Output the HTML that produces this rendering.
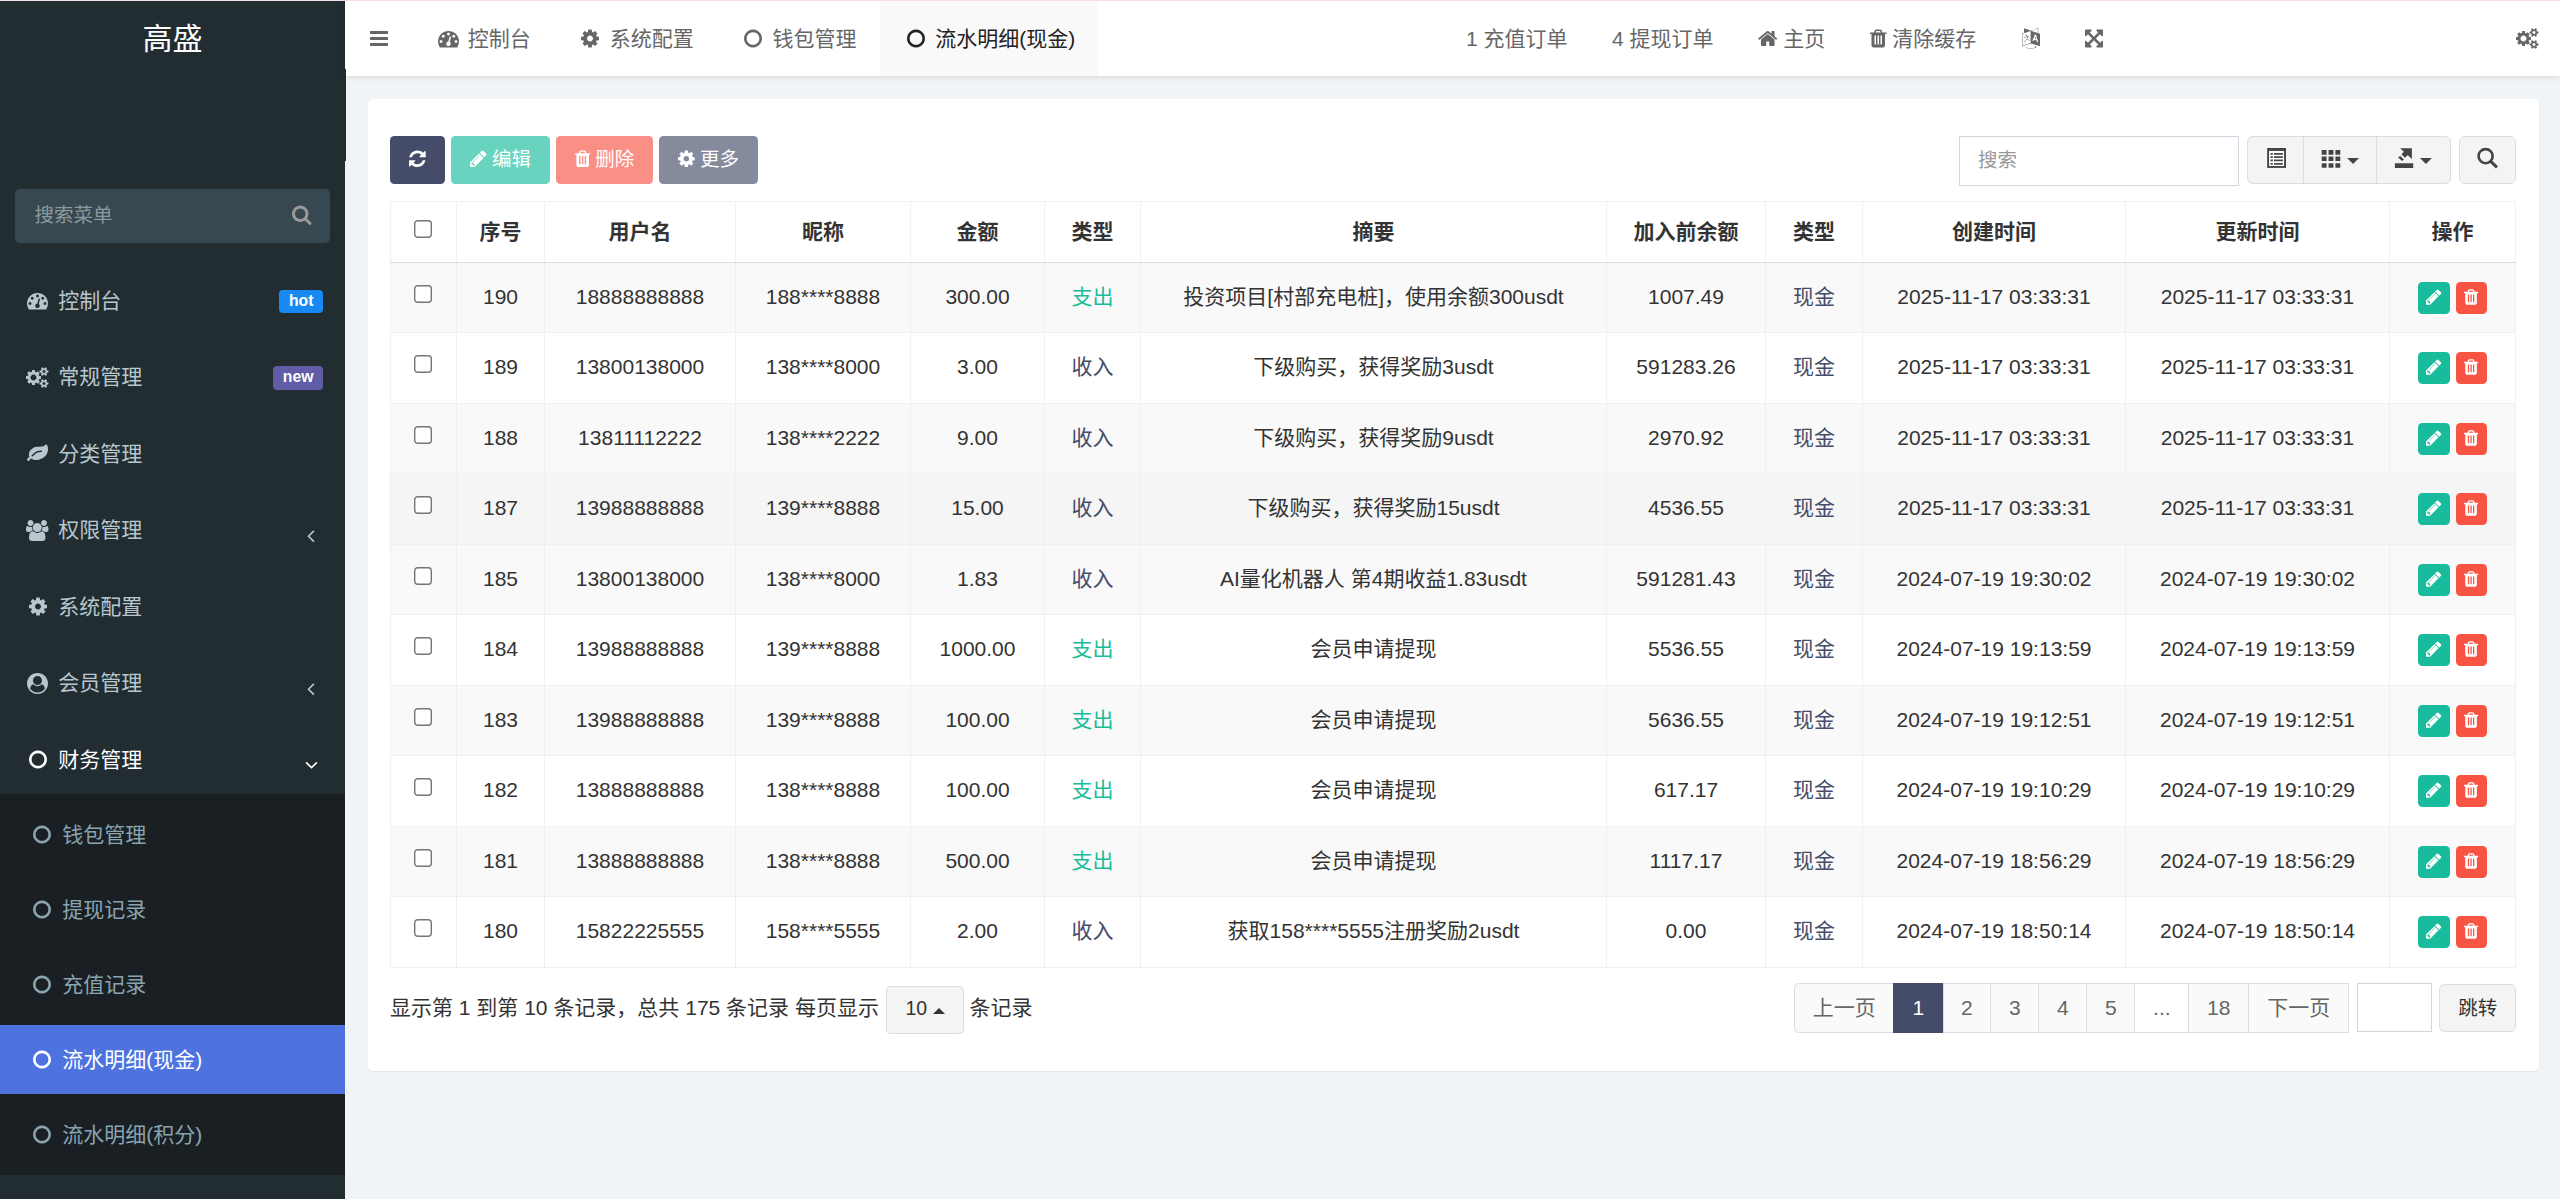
<!DOCTYPE html>
<html lang="zh-CN"><head><meta charset="utf-8"><title>高盛</title>
<style>
*{box-sizing:border-box}
html,body{margin:0;padding:0}
body{width:2560px;height:1199px;overflow:hidden;position:relative;background:#f1f4f6;color:#333;
 font-family:"Liberation Sans","Noto Sans CJK SC",sans-serif;font-size:21px;line-height:30px}
ul{list-style:none;margin:0;padding:0}
a{color:inherit;text-decoration:none}
svg.fa{height:1em;vertical-align:-0.19em;fill:currentColor;display:inline-block;overflow:visible}
.fw{display:inline-block;width:1.2857em;text-align:center}

/* sidebar */
#sb{position:absolute;left:0;top:0;width:345px;height:1199px;background:#222d32;color:#b8c7ce}
#sb .logo{height:75px;line-height:77px;text-align:center;font-size:30px;color:#fff}
#sb .sform{position:absolute;left:15px;top:189px;width:315px;height:54px;background:#374850;border-radius:5px}
#sb .sform .ph{position:absolute;left:19.5px;top:11px;color:#8d989d;line-height:30px;font-size:19.5px}
#sb .menu{position:absolute;left:0;top:265.5px;width:345px}
#sb .menu>li{margin-bottom:7.5px;position:relative}
#sb .menu>li>a{display:block;height:69px;line-height:69px;padding-left:22.5px;position:relative;white-space:nowrap}
#sb .mi{display:inline-block;width:30px;text-align:center}
#sb .menu>li.act>a{color:#fff}
#sb .lbl{position:absolute;right:22px;top:24.5px;height:23px;line-height:21px;padding:0 9.5px;border-radius:4px;color:#fff;font-weight:bold;font-size:15.75px}
#sb .arr{position:absolute;right:30.5px;top:5px;font-size:21px;line-height:69px}
#sb .arr.down{transform:rotate(-90deg);right:31.5px;top:6px}
#sb .tv{background:#191f23;padding:6px 0 6px 0;}
#sb .tv li:last-child{margin-bottom:0}
#sb .tv li{height:69px;margin-bottom:6px}
#sb .tv li a{display:block;height:69px;line-height:69px;padding-left:26.5px;color:#8aa4af;white-space:nowrap}
#sb .tv li.cur{background:#4e73df}
#sb .tv li.cur a{color:#fff}

/* navbar */
#nb{position:absolute;left:345px;top:0;width:2215px;height:76px;background:#fff;border-top:1px solid #fff;box-shadow:0 1px 6px rgba(0,21,41,.12);color:#666}
#nb .tog{position:absolute;left:24.7px;top:22.5px;line-height:30px;color:#666}
#nb .tabs{position:absolute;left:67.5px;top:0;height:75px;white-space:nowrap;font-size:0}
#nb .tabs li{display:inline-block;height:75px;padding:22.5px 22.5px 0;font-size:21px;line-height:30px;margin-right:1px;vertical-align:top}
#nb .tabs li.on{background:#f9f9f9;color:#222}
#nb .rnav li{position:absolute;top:22.5px;line-height:30px;white-space:nowrap}

/* panel */
#panel{position:absolute;left:368px;top:99px;width:2171px;height:972px;background:#fff;border-radius:5px;box-shadow:0 1px 2px rgba(0,0,0,.06)}
.tb .btn{position:absolute;top:37px;height:48px;border-radius:4.5px;color:#fff;font-size:19.5px;line-height:47px;text-align:center;white-space:nowrap}
.b-pri{background:#444c69}.b-suc{background:#18bc9c}.b-dan{background:#f75444}
.btn.dis{opacity:.65}
.srch{position:absolute;left:1591px;top:37px;width:280px;height:49.5px;border:1px solid #d2d6de;background:#fff}
.srch span{position:absolute;left:18px;top:8px;color:#999;line-height:30px;font-size:19.5px}
.bg{position:absolute;left:1879px;top:37px;width:204px;height:48px;border:1px solid #ddd;border-radius:6px;background:#f4f4f4;overflow:hidden}
.bg a{position:absolute;top:0;height:46px;line-height:46px;text-align:center}
.bg .b1{left:0;width:56px;border-right:1px solid #ddd}
.bg .b2{left:56px;width:73px;border-right:1px solid #ddd}
.bg .b3{left:129px;width:73px}
.caret{display:inline-block;width:0;height:0;border-left:6px solid transparent;border-right:6px solid transparent;border-top:6px solid #333;vertical-align:middle;margin-left:2px}
.caret.up{border-top:0;border-bottom:6px solid #333}
.sbtn{position:absolute;left:2091px;top:37px;width:57px;height:48px;border:1px solid #ddd;border-radius:6px;background:#f4f4f4;text-align:center;line-height:44px;font-size:24px;color:#333}

#t{position:absolute;left:22px;top:102px;width:2125px;border-collapse:collapse;table-layout:fixed}
#t th,#t td{border:1px solid #f0f0f0;text-align:center;vertical-align:middle;padding:0;white-space:nowrap;overflow:hidden}
#t th{height:60.5px;font-weight:bold;border-bottom:1px solid #ddd;color:#333}
#t td{height:70.5px;padding-bottom:1px}
#t tr.odd td{background:#f9f9f9}
#t tr.hov td{background:#f5f5f5}
.cb{display:inline-block;width:18px;height:18px;vertical-align:middle;position:relative;top:-4.5px;left:-1px}
.suc{color:#18bc9c}.pri{color:#444c69}
.xs{display:inline-block;height:32px;line-height:30px;border-radius:4.5px;color:#fff;font-size:18px;vertical-align:middle;text-align:center}
.xs.ed{background:#18bc9c;width:32px;margin-right:0.3px}.xs.de{background:#f75444;width:31px}
.xs{position:relative;top:1.5px}
#t tbody tr:nth-child(even) .xs{top:0.5px}
.xs svg.fa{vertical-align:-0.165em}
.btn svg.fa{vertical-align:-0.142857em}

.pinfo{position:absolute;left:22px;top:886px;line-height:30px;white-space:nowrap}
.psz{display:inline-block;height:48px;line-height:42.5px;padding:0 18px;border:1px solid #ddd;border-radius:4.5px;background:#f4f4f4;font-size:19.5px;vertical-align:middle;position:relative;top:0.5px}
.psz .caret{margin-left:0;position:relative;top:2px}
.psz{margin-left:1.7px}
.pg{position:absolute;left:1426.3px;top:884px;height:49.5px;white-space:nowrap;font-size:0}
.pg li{position:absolute;top:0;height:49.5px;line-height:47.5px;border:1px solid #ddd;background:#fafafa;color:#666;font-size:21px;text-align:center}
.pg li:first-child{border-radius:4.5px 0 0 4.5px}
.pg li.act{background:#444c69;border-color:#444c69;color:#fff}
.pg li.dis{background:#fff}
.jin{position:absolute;left:1989px;top:884px;width:75px;height:49px;border:1px solid #d2d6de;background:#fff}
.jbtn{position:absolute;left:2071.4px;top:885.2px;width:76.6px;height:47.6px;border:1px solid #ddd;border-radius:5.5px;background:#f4f4f4;text-align:center;line-height:46px;font-size:19.5px;color:#333}

#strip{position:absolute;left:345px;top:69px;width:1px;height:92px;background:#222d32;z-index:5}

#pink{position:absolute;left:0;top:0;width:2560px;height:1px;background:#f7dee3;z-index:10}

</style></head><body>
<aside id="sb">
  <div class="logo">高盛</div>
  <div class="sform"><span class="ph">搜索菜单</span><svg class="fa " viewBox="0 -1536 1664 1792" style="width:0.9286em;position:absolute;left:277px;top:15px;font-size:21px;color:#999"><path transform="scale(1,-1)" d="M1152 704q0 185 -131.5 316.5t-316.5 131.5t-316.5 -131.5t-131.5 -316.5t131.5 -316.5t316.5 -131.5t316.5 131.5t131.5 316.5zM1664 -128q0 -52 -38 -90t-90 -38q-54 0 -90 38l-343 342q-179 -124 -399 -124q-143 0 -273.5 55.5t-225 150t-150 225t-55.5 273.5 t55.5 273.5t150 225t225 150t273.5 55.5t273.5 -55.5t225 -150t150 -225t55.5 -273.5q0 -220 -124 -399l343 -343q37 -37 37 -90z"/></svg></div>
  <ul class="menu">
<li class=""><a><span class="mi"><svg class="fa " viewBox="0 -1536 1792 1792" style="width:1.0000em;"><path transform="scale(1,-1)" d="M384 384q0 53 -37.5 90.5t-90.5 37.5t-90.5 -37.5t-37.5 -90.5t37.5 -90.5t90.5 -37.5t90.5 37.5t37.5 90.5zM576 832q0 53 -37.5 90.5t-90.5 37.5t-90.5 -37.5t-37.5 -90.5t37.5 -90.5t90.5 -37.5t90.5 37.5t37.5 90.5zM1004 351l101 382q6 26 -7.5 48.5t-38.5 29.5 t-48 -6.5t-30 -39.5l-101 -382q-60 -5 -107 -43.5t-63 -98.5q-20 -77 20 -146t117 -89t146 20t89 117q16 60 -6 117t-72 91zM1664 384q0 53 -37.5 90.5t-90.5 37.5t-90.5 -37.5t-37.5 -90.5t37.5 -90.5t90.5 -37.5t90.5 37.5t37.5 90.5zM1024 1024q0 53 -37.5 90.5 t-90.5 37.5t-90.5 -37.5t-37.5 -90.5t37.5 -90.5t90.5 -37.5t90.5 37.5t37.5 90.5zM1472 832q0 53 -37.5 90.5t-90.5 37.5t-90.5 -37.5t-37.5 -90.5t37.5 -90.5t90.5 -37.5t90.5 37.5t37.5 90.5zM1792 384q0 -261 -141 -483q-19 -29 -54 -29h-1402q-35 0 -54 29 q-141 221 -141 483q0 182 71 348t191 286t286 191t348 71t348 -71t286 -191t191 -286t71 -348z"/></svg></span> <span>控制台</span><span class="lbl" style="background:#178af2;padding-left:10.5px">hot</span></a>
</li>
<li class=""><a><span class="mi"><svg class="fa " viewBox="0 -1536 1920 1792" style="width:1.0714em;"><path transform="scale(1,-1)" d="M896 640q0 106 -75 181t-181 75t-181 -75t-75 -181t75 -181t181 -75t181 75t75 181zM1664 128q0 52 -38 90t-90 38t-90 -38t-38 -90q0 -53 37.5 -90.5t90.5 -37.5t90.5 37.5t37.5 90.5zM1664 1152q0 52 -38 90t-90 38t-90 -38t-38 -90q0 -53 37.5 -90.5t90.5 -37.5 t90.5 37.5t37.5 90.5zM1280 731v-185q0 -10 -7 -19.5t-16 -10.5l-155 -24q-11 -35 -32 -76q34 -48 90 -115q7 -11 7 -20q0 -12 -7 -19q-23 -30 -82.5 -89.5t-78.5 -59.5q-11 0 -21 7l-115 90q-37 -19 -77 -31q-11 -108 -23 -155q-7 -24 -30 -24h-186q-11 0 -20 7.5t-10 17.5 l-23 153q-34 10 -75 31l-118 -89q-7 -7 -20 -7q-11 0 -21 8q-144 133 -144 160q0 9 7 19q10 14 41 53t47 61q-23 44 -35 82l-152 24q-10 1 -17 9.5t-7 19.5v185q0 10 7 19.5t16 10.5l155 24q11 35 32 76q-34 48 -90 115q-7 11 -7 20q0 12 7 20q22 30 82 89t79 59q11 0 21 -7 l115 -90q34 18 77 32q11 108 23 154q7 24 30 24h186q11 0 20 -7.5t10 -17.5l23 -153q34 -10 75 -31l118 89q8 7 20 7q11 0 21 -8q144 -133 144 -160q0 -8 -7 -19q-12 -16 -42 -54t-45 -60q23 -48 34 -82l152 -23q10 -2 17 -10.5t7 -19.5zM1920 198v-140q0 -16 -149 -31 q-12 -27 -30 -52q51 -113 51 -138q0 -4 -4 -7q-122 -71 -124 -71q-8 0 -46 47t-52 68q-20 -2 -30 -2t-30 2q-14 -21 -52 -68t-46 -47q-2 0 -124 71q-4 3 -4 7q0 25 51 138q-18 25 -30 52q-149 15 -149 31v140q0 16 149 31q13 29 30 52q-51 113 -51 138q0 4 4 7q4 2 35 20 t59 34t30 16q8 0 46 -46.5t52 -67.5q20 2 30 2t30 -2q51 71 92 112l6 2q4 0 124 -70q4 -3 4 -7q0 -25 -51 -138q17 -23 30 -52q149 -15 149 -31zM1920 1222v-140q0 -16 -149 -31q-12 -27 -30 -52q51 -113 51 -138q0 -4 -4 -7q-122 -71 -124 -71q-8 0 -46 47t-52 68 q-20 -2 -30 -2t-30 2q-14 -21 -52 -68t-46 -47q-2 0 -124 71q-4 3 -4 7q0 25 51 138q-18 25 -30 52q-149 15 -149 31v140q0 16 149 31q13 29 30 52q-51 113 -51 138q0 4 4 7q4 2 35 20t59 34t30 16q8 0 46 -46.5t52 -67.5q20 2 30 2t30 -2q51 71 92 112l6 2q4 0 124 -70 q4 -3 4 -7q0 -25 -51 -138q17 -23 30 -52q149 -15 149 -31z"/></svg></span> <span>常规管理</span><span class="lbl" style="background:#605ca8;top:23.5px;height:24px;line-height:22px">new</span></a>
</li>
<li class=""><a><span class="mi"><svg class="fa " viewBox="0 -1536 1792 1792" style="width:1.0000em;"><path transform="scale(1,-1)" d="M1280 832q0 26 -19 45t-45 19q-172 0 -318 -49.5t-259.5 -134t-235.5 -219.5q-19 -21 -19 -45q0 -26 19 -45t45 -19q24 0 45 19q27 24 74 71t67 66q137 124 268.5 176t313.5 52q26 0 45 19t19 45zM1792 1030q0 -95 -20 -193q-46 -224 -184.5 -383t-357.5 -268 q-214 -108 -438 -108q-148 0 -286 47q-15 5 -88 42t-96 37q-16 0 -39.5 -32t-45 -70t-52.5 -70t-60 -32q-43 0 -63.5 17.5t-45.5 59.5q-2 4 -6 11t-5.5 10t-3 9.5t-1.5 13.5q0 35 31 73.5t68 65.5t68 56t31 48q0 4 -14 38t-16 44q-9 51 -9 104q0 115 43.5 220t119 184.5 t170.5 139t204 95.5q55 18 145 25.5t179.5 9t178.5 6t163.5 24t113.5 56.5l29.5 29.5t29.5 28t27 20t36.5 16t43.5 4.5q39 0 70.5 -46t47.5 -112t24 -124t8 -96z"/></svg></span> <span>分类管理</span></a>
</li>
<li class=""><a><span class="mi"><svg class="fa " viewBox="0 -1536 1920 1792" style="width:1.0714em;"><path transform="scale(1,-1)" d="M593 640q-162 -5 -265 -128h-134q-82 0 -138 40.5t-56 118.5q0 353 124 353q6 0 43.5 -21t97.5 -42.5t119 -21.5q67 0 133 23q-5 -37 -5 -66q0 -139 81 -256zM1664 3q0 -120 -73 -189.5t-194 -69.5h-874q-121 0 -194 69.5t-73 189.5q0 53 3.5 103.5t14 109t26.5 108.5 t43 97.5t62 81t85.5 53.5t111.5 20q10 0 43 -21.5t73 -48t107 -48t135 -21.5t135 21.5t107 48t73 48t43 21.5q61 0 111.5 -20t85.5 -53.5t62 -81t43 -97.5t26.5 -108.5t14 -109t3.5 -103.5zM640 1280q0 -106 -75 -181t-181 -75t-181 75t-75 181t75 181t181 75t181 -75 t75 -181zM1344 896q0 -159 -112.5 -271.5t-271.5 -112.5t-271.5 112.5t-112.5 271.5t112.5 271.5t271.5 112.5t271.5 -112.5t112.5 -271.5zM1920 671q0 -78 -56 -118.5t-138 -40.5h-134q-103 123 -265 128q81 117 81 256q0 29 -5 66q66 -23 133 -23q59 0 119 21.5t97.5 42.5 t43.5 21q124 0 124 -353zM1792 1280q0 -106 -75 -181t-181 -75t-181 75t-75 181t75 181t181 75t181 -75t75 -181z"/></svg></span> <span>权限管理</span><span class="arr"><svg class="fa " viewBox="0 -1536 640 1792" style="width:0.3571em;"><path transform="scale(1,-1)" d="M627 992q0 -13 -10 -23l-393 -393l393 -393q10 -10 10 -23t-10 -23l-50 -50q-10 -10 -23 -10t-23 10l-466 466q-10 10 -10 23t10 23l466 466q10 10 23 10t23 -10l50 -50q10 -10 10 -23z"/></svg></span></a>
</li>
<li class=""><a><span class="mi"><svg class="fa " viewBox="0 -1536 1536 1792" style="width:0.8571em;"><path transform="scale(1,-1)" d="M1024 640q0 106 -75 181t-181 75t-181 -75t-75 -181t75 -181t181 -75t181 75t75 181zM1536 749v-222q0 -12 -8 -23t-20 -13l-185 -28q-19 -54 -39 -91q35 -50 107 -138q10 -12 10 -25t-9 -23q-27 -37 -99 -108t-94 -71q-12 0 -26 9l-138 108q-44 -23 -91 -38 q-16 -136 -29 -186q-7 -28 -36 -28h-222q-14 0 -24.5 8.5t-11.5 21.5l-28 184q-49 16 -90 37l-141 -107q-10 -9 -25 -9q-14 0 -25 11q-126 114 -165 168q-7 10 -7 23q0 12 8 23q15 21 51 66.5t54 70.5q-27 50 -41 99l-183 27q-13 2 -21 12.5t-8 23.5v222q0 12 8 23t19 13 l186 28q14 46 39 92q-40 57 -107 138q-10 12 -10 24q0 10 9 23q26 36 98.5 107.5t94.5 71.5q13 0 26 -10l138 -107q44 23 91 38q16 136 29 186q7 28 36 28h222q14 0 24.5 -8.5t11.5 -21.5l28 -184q49 -16 90 -37l142 107q9 9 24 9q13 0 25 -10q129 -119 165 -170q7 -8 7 -22 q0 -12 -8 -23q-15 -21 -51 -66.5t-54 -70.5q26 -50 41 -98l183 -28q13 -2 21 -12.5t8 -23.5z"/></svg></span> <span>系统配置</span></a>
</li>
<li class=""><a><span class="mi"><svg class="fa " viewBox="0 -1536 1792 1792" style="width:1.0000em;"><path transform="scale(1,-1)" d="M1523 197q-22 155 -87.5 257.5t-184.5 118.5q-67 -74 -159.5 -115.5t-195.5 -41.5t-195.5 41.5t-159.5 115.5q-119 -16 -184.5 -118.5t-87.5 -257.5q106 -150 271 -237.5t356 -87.5t356 87.5t271 237.5zM1280 896q0 159 -112.5 271.5t-271.5 112.5t-271.5 -112.5 t-112.5 -271.5t112.5 -271.5t271.5 -112.5t271.5 112.5t112.5 271.5zM1792 640q0 -182 -71 -347.5t-190.5 -286t-285.5 -191.5t-349 -71q-182 0 -348 71t-286 191t-191 286t-71 348t71 348t191 286t286 191t348 71t348 -71t286 -191t191 -286t71 -348z"/></svg></span> <span>会员管理</span><span class="arr"><svg class="fa " viewBox="0 -1536 640 1792" style="width:0.3571em;"><path transform="scale(1,-1)" d="M627 992q0 -13 -10 -23l-393 -393l393 -393q10 -10 10 -23t-10 -23l-50 -50q-10 -10 -23 -10t-23 10l-466 466q-10 10 -10 23t10 23l466 466q10 10 23 10t23 -10l50 -50q10 -10 10 -23z"/></svg></span></a>
</li>
<li class="act"><a><span class="mi"><svg class="fa " viewBox="0 -1536 1536 1792" style="width:0.8571em;"><path transform="scale(1,-1)" d="M768 1184q-148 0 -273 -73t-198 -198t-73 -273t73 -273t198 -198t273 -73t273 73t198 198t73 273t-73 273t-198 198t-273 73zM1536 640q0 -209 -103 -385.5t-279.5 -279.5t-385.5 -103t-385.5 103t-279.5 279.5t-103 385.5t103 385.5t279.5 279.5t385.5 103t385.5 -103 t279.5 -279.5t103 -385.5z"/></svg></span> <span>财务管理</span><span class="arr down"><svg class="fa " viewBox="0 -1536 640 1792" style="width:0.3571em;"><path transform="scale(1,-1)" d="M627 992q0 -13 -10 -23l-393 -393l393 -393q10 -10 10 -23t-10 -23l-50 -50q-10 -10 -23 -10t-23 10l-466 466q-10 10 -10 23t10 23l466 466q10 10 23 10t23 -10l50 -50q10 -10 10 -23z"/></svg></span></a>
<ul class="tv">
<li><a><span class="mi"><svg class="fa " viewBox="0 -1536 1536 1792" style="width:0.8571em;"><path transform="scale(1,-1)" d="M768 1184q-148 0 -273 -73t-198 -198t-73 -273t73 -273t198 -198t273 -73t273 73t198 198t73 273t-73 273t-198 198t-273 73zM1536 640q0 -209 -103 -385.5t-279.5 -279.5t-385.5 -103t-385.5 103t-279.5 279.5t-103 385.5t103 385.5t279.5 279.5t385.5 103t385.5 -103 t279.5 -279.5t103 -385.5z"/></svg></span> <span>钱包管理</span></a></li>
<li><a><span class="mi"><svg class="fa " viewBox="0 -1536 1536 1792" style="width:0.8571em;"><path transform="scale(1,-1)" d="M768 1184q-148 0 -273 -73t-198 -198t-73 -273t73 -273t198 -198t273 -73t273 73t198 198t73 273t-73 273t-198 198t-273 73zM1536 640q0 -209 -103 -385.5t-279.5 -279.5t-385.5 -103t-385.5 103t-279.5 279.5t-103 385.5t103 385.5t279.5 279.5t385.5 103t385.5 -103 t279.5 -279.5t103 -385.5z"/></svg></span> <span>提现记录</span></a></li>
<li><a><span class="mi"><svg class="fa " viewBox="0 -1536 1536 1792" style="width:0.8571em;"><path transform="scale(1,-1)" d="M768 1184q-148 0 -273 -73t-198 -198t-73 -273t73 -273t198 -198t273 -73t273 73t198 198t73 273t-73 273t-198 198t-273 73zM1536 640q0 -209 -103 -385.5t-279.5 -279.5t-385.5 -103t-385.5 103t-279.5 279.5t-103 385.5t103 385.5t279.5 279.5t385.5 103t385.5 -103 t279.5 -279.5t103 -385.5z"/></svg></span> <span>充值记录</span></a></li>
<li class="cur"><a><span class="mi"><svg class="fa " viewBox="0 -1536 1536 1792" style="width:0.8571em;"><path transform="scale(1,-1)" d="M768 1184q-148 0 -273 -73t-198 -198t-73 -273t73 -273t198 -198t273 -73t273 73t198 198t73 273t-73 273t-198 198t-273 73zM1536 640q0 -209 -103 -385.5t-279.5 -279.5t-385.5 -103t-385.5 103t-279.5 279.5t-103 385.5t103 385.5t279.5 279.5t385.5 103t385.5 -103 t279.5 -279.5t103 -385.5z"/></svg></span> <span>流水明细(现金)</span></a></li>
<li><a><span class="mi"><svg class="fa " viewBox="0 -1536 1536 1792" style="width:0.8571em;"><path transform="scale(1,-1)" d="M768 1184q-148 0 -273 -73t-198 -198t-73 -273t73 -273t198 -198t273 -73t273 73t198 198t73 273t-73 273t-198 198t-273 73zM1536 640q0 -209 -103 -385.5t-279.5 -279.5t-385.5 -103t-385.5 103t-279.5 279.5t-103 385.5t103 385.5t279.5 279.5t385.5 103t385.5 -103 t279.5 -279.5t103 -385.5z"/></svg></span> <span>流水明细(积分)</span></a></li>
</ul>
</li>
  </ul>
</aside>
<div id="pink"></div>
<div id="strip"></div>
<header id="nb">
  <a class="tog"><svg class="fa " viewBox="0 -1536 1536 1792" style="width:0.8571em;"><path transform="scale(1,-1)" d="M1536 192v-128q0 -26 -19 -45t-45 -19h-1408q-26 0 -45 19t-19 45v128q0 26 19 45t45 19h1408q26 0 45 -19t19 -45zM1536 704v-128q0 -26 -19 -45t-45 -19h-1408q-26 0 -45 19t-19 45v128q0 26 19 45t45 19h1408q26 0 45 -19t19 -45zM1536 1216v-128q0 -26 -19 -45 t-45 -19h-1408q-26 0 -45 19t-19 45v128q0 26 19 45t45 19h1408q26 0 45 -19t19 -45z"/></svg></a>
  <ul class="tabs"><li class=""><a><span class="fw" style=""><svg class="fa " viewBox="0 -1536 1792 1792" style="width:1.0000em;"><path transform="scale(1,-1)" d="M384 384q0 53 -37.5 90.5t-90.5 37.5t-90.5 -37.5t-37.5 -90.5t37.5 -90.5t90.5 -37.5t90.5 37.5t37.5 90.5zM576 832q0 53 -37.5 90.5t-90.5 37.5t-90.5 -37.5t-37.5 -90.5t37.5 -90.5t90.5 -37.5t90.5 37.5t37.5 90.5zM1004 351l101 382q6 26 -7.5 48.5t-38.5 29.5 t-48 -6.5t-30 -39.5l-101 -382q-60 -5 -107 -43.5t-63 -98.5q-20 -77 20 -146t117 -89t146 20t89 117q16 60 -6 117t-72 91zM1664 384q0 53 -37.5 90.5t-90.5 37.5t-90.5 -37.5t-37.5 -90.5t37.5 -90.5t90.5 -37.5t90.5 37.5t37.5 90.5zM1024 1024q0 53 -37.5 90.5 t-90.5 37.5t-90.5 -37.5t-37.5 -90.5t37.5 -90.5t90.5 -37.5t90.5 37.5t37.5 90.5zM1472 832q0 53 -37.5 90.5t-90.5 37.5t-90.5 -37.5t-37.5 -90.5t37.5 -90.5t90.5 -37.5t90.5 37.5t37.5 90.5zM1792 384q0 -261 -141 -483q-19 -29 -54 -29h-1402q-35 0 -54 29 q-141 221 -141 483q0 182 71 348t191 286t286 191t348 71t348 -71t286 -191t191 -286t71 -348z"/></svg></span> <span>控制台</span></a></li><li class=""><a><span class="fw" style=""><svg class="fa " viewBox="0 -1536 1536 1792" style="width:0.8571em;"><path transform="scale(1,-1)" d="M1024 640q0 106 -75 181t-181 75t-181 -75t-75 -181t75 -181t181 -75t181 75t75 181zM1536 749v-222q0 -12 -8 -23t-20 -13l-185 -28q-19 -54 -39 -91q35 -50 107 -138q10 -12 10 -25t-9 -23q-27 -37 -99 -108t-94 -71q-12 0 -26 9l-138 108q-44 -23 -91 -38 q-16 -136 -29 -186q-7 -28 -36 -28h-222q-14 0 -24.5 8.5t-11.5 21.5l-28 184q-49 16 -90 37l-141 -107q-10 -9 -25 -9q-14 0 -25 11q-126 114 -165 168q-7 10 -7 23q0 12 8 23q15 21 51 66.5t54 70.5q-27 50 -41 99l-183 27q-13 2 -21 12.5t-8 23.5v222q0 12 8 23t19 13 l186 28q14 46 39 92q-40 57 -107 138q-10 12 -10 24q0 10 9 23q26 36 98.5 107.5t94.5 71.5q13 0 26 -10l138 -107q44 23 91 38q16 136 29 186q7 28 36 28h222q14 0 24.5 -8.5t11.5 -21.5l28 -184q49 -16 90 -37l142 107q9 9 24 9q13 0 25 -10q129 -119 165 -170q7 -8 7 -22 q0 -12 -8 -23q-15 -21 -51 -66.5t-54 -70.5q26 -50 41 -98l183 -28q13 -2 21 -12.5t8 -23.5z"/></svg></span> <span>系统配置</span></a></li><li class=""><a><span class="fw" style=""><svg class="fa " viewBox="0 -1536 1536 1792" style="width:0.8571em;"><path transform="scale(1,-1)" d="M768 1184q-148 0 -273 -73t-198 -198t-73 -273t73 -273t198 -198t273 -73t273 73t198 198t73 273t-73 273t-198 198t-273 73zM1536 640q0 -209 -103 -385.5t-279.5 -279.5t-385.5 -103t-385.5 103t-279.5 279.5t-103 385.5t103 385.5t279.5 279.5t385.5 103t385.5 -103 t279.5 -279.5t103 -385.5z"/></svg></span> <span>钱包管理</span></a></li><li class="on"><a><span class="fw" style=""><svg class="fa " viewBox="0 -1536 1536 1792" style="width:0.8571em;"><path transform="scale(1,-1)" d="M768 1184q-148 0 -273 -73t-198 -198t-73 -273t73 -273t198 -198t273 -73t273 73t198 198t73 273t-73 273t-198 198t-273 73zM1536 640q0 -209 -103 -385.5t-279.5 -279.5t-385.5 -103t-385.5 103t-279.5 279.5t-103 385.5t103 385.5t279.5 279.5t385.5 103t385.5 -103 t279.5 -279.5t103 -385.5z"/></svg></span> <span>流水明细(现金)</span></a></li></ul>
  <ul class="rnav">
    <li style="left:1121px"><a>1 充值订单</a></li>
    <li style="left:1267px"><a>4 提现订单</a></li>
    <li style="left:1413px"><a><svg class="fa " viewBox="0 -1536 1664 1792" style="width:0.9286em;"><path transform="scale(1,-1)" d="M1408 544v-480q0 -26 -19 -45t-45 -19h-384v384h-256v-384h-384q-26 0 -45 19t-19 45v480q0 1 0.5 3t0.5 3l575 474l575 -474q1 -2 1 -6zM1631 613l-62 -74q-8 -9 -21 -11h-3q-13 0 -21 7l-692 577l-692 -577q-12 -8 -24 -7q-13 2 -21 11l-62 74q-8 10 -7 23.5t11 21.5 l719 599q32 26 76 26t76 -26l244 -204v195q0 14 9 23t23 9h192q14 0 23 -9t9 -23v-408l219 -182q10 -8 11 -21.5t-7 -23.5z"/></svg> 主页</a></li>
    <li style="left:1525px"><a><svg class="fa " viewBox="0 -1536 1408 1792" style="width:0.7857em;"><path transform="scale(1,-1)" d="M512 160v704q0 14 -9 23t-23 9h-64q-14 0 -23 -9t-9 -23v-704q0 -14 9 -23t23 -9h64q14 0 23 9t9 23zM768 160v704q0 14 -9 23t-23 9h-64q-14 0 -23 -9t-9 -23v-704q0 -14 9 -23t23 -9h64q14 0 23 9t9 23zM1024 160v704q0 14 -9 23t-23 9h-64q-14 0 -23 -9t-9 -23v-704 q0 -14 9 -23t23 -9h64q14 0 23 9t9 23zM480 1152h448l-48 117q-7 9 -17 11h-317q-10 -2 -17 -11zM1408 1120v-64q0 -14 -9 -23t-23 -9h-96v-948q0 -83 -47 -143.5t-113 -60.5h-832q-66 0 -113 58.5t-47 141.5v952h-96q-14 0 -23 9t-9 23v64q0 14 9 23t23 9h309l70 167 q15 37 54 63t79 26h320q40 0 79 -26t54 -63l70 -167h309q14 0 23 -9t9 -23z"/></svg> 清除缓存</a></li>
    <li style="left:1676.7px"><a><svg class="fa " viewBox="0 -1536 1536 1792" style="width:0.8571em;"><path transform="scale(1,-1)" d="M654 458q-1 -3 -12.5 0.5t-31.5 11.5l-20 9q-44 20 -87 49q-7 5 -41 31.5t-38 28.5q-67 -103 -134 -181q-81 -95 -105 -110q-4 -2 -19.5 -4t-18.5 0q6 4 82 92q21 24 85.5 115t78.5 118q17 30 51 98.5t36 77.5q-8 1 -110 -33q-8 -2 -27.5 -7.5t-34.5 -9.5t-17 -5 q-2 -2 -2 -10.5t-1 -9.5q-5 -10 -31 -15q-23 -7 -47 0q-18 4 -28 21q-4 6 -5 23q6 2 24.5 5t29.5 6q58 16 105 32q100 35 102 35q10 2 43 19.5t44 21.5q9 3 21.5 8t14.5 5.5t6 -0.5q2 -12 -1 -33q0 -2 -12.5 -27t-26.5 -53.5t-17 -33.5q-25 -50 -77 -131l64 -28 q12 -6 74.5 -32t67.5 -28q4 -1 10.5 -25.5t4.5 -30.5zM449 944q3 -15 -4 -28q-12 -23 -50 -38q-30 -12 -60 -12q-26 3 -49 26q-14 15 -18 41l1 3q3 -3 19.5 -5t26.5 0t58 16q36 12 55 14q17 0 21 -17zM1147 815l63 -227l-139 42zM39 15l694 232v1032l-694 -233v-1031z M1280 332l102 -31l-181 657l-100 31l-216 -536l102 -31l45 110l211 -65zM777 1294l573 -184v380zM1088 -29l158 -13l-54 -160l-40 66q-130 -83 -276 -108q-58 -12 -91 -12h-84q-79 0 -199.5 39t-183.5 85q-8 7 -8 16q0 8 5 13.5t13 5.5q4 0 18 -7.5t30.5 -16.5t20.5 -11 q73 -37 159.5 -61.5t157.5 -24.5q95 0 167 14.5t157 50.5q15 7 30.5 15.5t34 19t28.5 16.5zM1536 1050v-1079l-774 246q-14 -6 -375 -127.5t-368 -121.5q-13 0 -18 13q0 1 -1 3v1078q3 9 4 10q5 6 20 11q107 36 149 50v384l558 -198q2 0 160.5 55t316 108.5t161.5 53.5 q20 0 20 -21v-418z"/></svg></a></li>
    <li style="left:1740.1px"><a><svg class="fa " viewBox="0 -1536 1536 1792" style="width:0.8571em;"><path transform="scale(1,-1)" d="M1283 995l-355 -355l355 -355l144 144q29 31 70 14q39 -17 39 -59v-448q0 -26 -19 -45t-45 -19h-448q-42 0 -59 40q-17 39 14 69l144 144l-355 355l-355 -355l144 -144q31 -30 14 -69q-17 -40 -59 -40h-448q-26 0 -45 19t-19 45v448q0 42 40 59q39 17 69 -14l144 -144 l355 355l-355 355l-144 -144q-19 -19 -45 -19q-12 0 -24 5q-40 17 -40 59v448q0 26 19 45t45 19h448q42 0 59 -40q17 -39 -14 -69l-144 -144l355 -355l355 355l-144 144q-31 30 -14 69q17 40 59 40h448q26 0 45 -19t19 -45v-448q0 -42 -39 -59q-13 -5 -25 -5q-26 0 -45 19z "/></svg></a></li>
    <li style="left:2171.1px"><a><svg class="fa " viewBox="0 -1536 1920 1792" style="width:1.0714em;"><path transform="scale(1,-1)" d="M896 640q0 106 -75 181t-181 75t-181 -75t-75 -181t75 -181t181 -75t181 75t75 181zM1664 128q0 52 -38 90t-90 38t-90 -38t-38 -90q0 -53 37.5 -90.5t90.5 -37.5t90.5 37.5t37.5 90.5zM1664 1152q0 52 -38 90t-90 38t-90 -38t-38 -90q0 -53 37.5 -90.5t90.5 -37.5 t90.5 37.5t37.5 90.5zM1280 731v-185q0 -10 -7 -19.5t-16 -10.5l-155 -24q-11 -35 -32 -76q34 -48 90 -115q7 -11 7 -20q0 -12 -7 -19q-23 -30 -82.5 -89.5t-78.5 -59.5q-11 0 -21 7l-115 90q-37 -19 -77 -31q-11 -108 -23 -155q-7 -24 -30 -24h-186q-11 0 -20 7.5t-10 17.5 l-23 153q-34 10 -75 31l-118 -89q-7 -7 -20 -7q-11 0 -21 8q-144 133 -144 160q0 9 7 19q10 14 41 53t47 61q-23 44 -35 82l-152 24q-10 1 -17 9.5t-7 19.5v185q0 10 7 19.5t16 10.5l155 24q11 35 32 76q-34 48 -90 115q-7 11 -7 20q0 12 7 20q22 30 82 89t79 59q11 0 21 -7 l115 -90q34 18 77 32q11 108 23 154q7 24 30 24h186q11 0 20 -7.5t10 -17.5l23 -153q34 -10 75 -31l118 89q8 7 20 7q11 0 21 -8q144 -133 144 -160q0 -8 -7 -19q-12 -16 -42 -54t-45 -60q23 -48 34 -82l152 -23q10 -2 17 -10.5t7 -19.5zM1920 198v-140q0 -16 -149 -31 q-12 -27 -30 -52q51 -113 51 -138q0 -4 -4 -7q-122 -71 -124 -71q-8 0 -46 47t-52 68q-20 -2 -30 -2t-30 2q-14 -21 -52 -68t-46 -47q-2 0 -124 71q-4 3 -4 7q0 25 51 138q-18 25 -30 52q-149 15 -149 31v140q0 16 149 31q13 29 30 52q-51 113 -51 138q0 4 4 7q4 2 35 20 t59 34t30 16q8 0 46 -46.5t52 -67.5q20 2 30 2t30 -2q51 71 92 112l6 2q4 0 124 -70q4 -3 4 -7q0 -25 -51 -138q17 -23 30 -52q149 -15 149 -31zM1920 1222v-140q0 -16 -149 -31q-12 -27 -30 -52q51 -113 51 -138q0 -4 -4 -7q-122 -71 -124 -71q-8 0 -46 47t-52 68 q-20 -2 -30 -2t-30 2q-14 -21 -52 -68t-46 -47q-2 0 -124 71q-4 3 -4 7q0 25 51 138q-18 25 -30 52q-149 15 -149 31v140q0 16 149 31q13 29 30 52q-51 113 -51 138q0 4 4 7q4 2 35 20t59 34t30 16q8 0 46 -46.5t52 -67.5q20 2 30 2t30 -2q51 71 92 112l6 2q4 0 124 -70 q4 -3 4 -7q0 -25 -51 -138q17 -23 30 -52q149 -15 149 -31z"/></svg></a></li>
  </ul>
</header>
<div id="panel">
  <div class="tb">
    <a class="btn b-pri" style="left:22px;width:55px"><svg class="fa " viewBox="0 -1536 1536 1792" style="width:0.8571em;"><path transform="scale(1,-1)" d="M1511 480q0 -5 -1 -7q-64 -268 -268 -434.5t-478 -166.5q-146 0 -282.5 55t-243.5 157l-129 -129q-19 -19 -45 -19t-45 19t-19 45v448q0 26 19 45t45 19h448q26 0 45 -19t19 -45t-19 -45l-137 -137q71 -66 161 -102t187 -36q134 0 250 65t186 179q11 17 53 117 q8 23 30 23h192q13 0 22.5 -9.5t9.5 -22.5zM1536 1280v-448q0 -26 -19 -45t-45 -19h-448q-26 0 -45 19t-19 45t19 45l138 138q-148 137 -349 137q-134 0 -250 -65t-186 -179q-11 -17 -53 -117q-8 -23 -30 -23h-199q-13 0 -22.5 9.5t-9.5 22.5v7q65 268 270 434.5t480 166.5 q146 0 284 -55.5t245 -156.5l130 129q19 19 45 19t45 -19t19 -45z"/></svg></a>
    <a class="btn b-suc dis" style="left:83px;width:99px"><svg class="fa " viewBox="0 -1536 1536 1792" style="width:0.8571em;"><path transform="scale(1,-1)" d="M363 0l91 91l-235 235l-91 -91v-107h128v-128h107zM886 928q0 22 -22 22q-10 0 -17 -7l-542 -542q-7 -7 -7 -17q0 -22 22 -22q10 0 17 7l542 542q7 7 7 17zM832 1120l416 -416l-832 -832h-416v416zM1515 1024q0 -53 -37 -90l-166 -166l-416 416l166 165q36 38 90 38 q53 0 91 -38l235 -234q37 -39 37 -91z"/></svg> 编辑</a>
    <a class="btn b-dan dis" style="left:188px;width:97px"><svg class="fa " viewBox="0 -1536 1408 1792" style="width:0.7857em;"><path transform="scale(1,-1)" d="M512 160v704q0 14 -9 23t-23 9h-64q-14 0 -23 -9t-9 -23v-704q0 -14 9 -23t23 -9h64q14 0 23 9t9 23zM768 160v704q0 14 -9 23t-23 9h-64q-14 0 -23 -9t-9 -23v-704q0 -14 9 -23t23 -9h64q14 0 23 9t9 23zM1024 160v704q0 14 -9 23t-23 9h-64q-14 0 -23 -9t-9 -23v-704 q0 -14 9 -23t23 -9h64q14 0 23 9t9 23zM480 1152h448l-48 117q-7 9 -17 11h-317q-10 -2 -17 -11zM1408 1120v-64q0 -14 -9 -23t-23 -9h-96v-948q0 -83 -47 -143.5t-113 -60.5h-832q-66 0 -113 58.5t-47 141.5v952h-96q-14 0 -23 9t-9 23v64q0 14 9 23t23 9h309l70 167 q15 37 54 63t79 26h320q40 0 79 -26t54 -63l70 -167h309q14 0 23 -9t9 -23z"/></svg> 删除</a>
    <a class="btn b-pri dis" style="left:291px;width:99px"><svg class="fa " viewBox="0 -1536 1536 1792" style="width:0.8571em;"><path transform="scale(1,-1)" d="M1024 640q0 106 -75 181t-181 75t-181 -75t-75 -181t75 -181t181 -75t181 75t75 181zM1536 749v-222q0 -12 -8 -23t-20 -13l-185 -28q-19 -54 -39 -91q35 -50 107 -138q10 -12 10 -25t-9 -23q-27 -37 -99 -108t-94 -71q-12 0 -26 9l-138 108q-44 -23 -91 -38 q-16 -136 -29 -186q-7 -28 -36 -28h-222q-14 0 -24.5 8.5t-11.5 21.5l-28 184q-49 16 -90 37l-141 -107q-10 -9 -25 -9q-14 0 -25 11q-126 114 -165 168q-7 10 -7 23q0 12 8 23q15 21 51 66.5t54 70.5q-27 50 -41 99l-183 27q-13 2 -21 12.5t-8 23.5v222q0 12 8 23t19 13 l186 28q14 46 39 92q-40 57 -107 138q-10 12 -10 24q0 10 9 23q26 36 98.5 107.5t94.5 71.5q13 0 26 -10l138 -107q44 23 91 38q16 136 29 186q7 28 36 28h222q14 0 24.5 -8.5t11.5 -21.5l28 -184q49 -16 90 -37l142 107q9 9 24 9q13 0 25 -10q129 -119 165 -170q7 -8 7 -22 q0 -12 -8 -23q-15 -21 -51 -66.5t-54 -70.5q26 -50 41 -98l183 -28q13 -2 21 -12.5t8 -23.5z"/></svg> 更多</a>
  </div>
  <div class="srch"><span>搜索</span></div>
  <div class="bg">
    <a class="b1"></a><a class="b2"></a><a class="b3"></a>
  </div>
  <a class="sbtn"></a>
  <svg class="ov" viewBox="2247 136 270 48" style="position:absolute;left:1879px;top:37px;width:270px;height:48px"><rect x="2267.15" y="148" width="18.85" height="19.9" fill="#444"/><rect x="2269.05" y="150.95" width="15.05" height="15.05" fill="#fdfdfd"/><rect x="2270.5" y="153.05" width="2.3" height="1.7" fill="#444"/><rect x="2274" y="153.05" width="8.9" height="1.7" fill="#444"/><rect x="2270.5" y="156.25" width="2.3" height="1.7" fill="#444"/><rect x="2274" y="156.25" width="8.9" height="1.7" fill="#444"/><rect x="2270.5" y="159.55" width="2.3" height="1.7" fill="#444"/><rect x="2274" y="159.55" width="8.9" height="1.7" fill="#444"/><rect x="2270.5" y="163.05" width="2.3" height="1.7" fill="#444"/><rect x="2274" y="163.05" width="8.9" height="1.7" fill="#444"/><rect x="2321.7" y="150.1" width="4.9" height="4.6" rx="0.5" fill="#444"/><rect x="2321.7" y="156.4" width="4.9" height="4.6" rx="0.5" fill="#444"/><rect x="2321.7" y="163.2" width="4.9" height="4.6" rx="0.5" fill="#444"/><rect x="2328.55" y="150.1" width="4.9" height="4.6" rx="0.5" fill="#444"/><rect x="2328.55" y="156.4" width="4.9" height="4.6" rx="0.5" fill="#444"/><rect x="2328.55" y="163.2" width="4.9" height="4.6" rx="0.5" fill="#444"/><rect x="2335.4" y="150.1" width="4.9" height="4.6" rx="0.5" fill="#444"/><rect x="2335.4" y="156.4" width="4.9" height="4.6" rx="0.5" fill="#444"/><rect x="2335.4" y="163.2" width="4.9" height="4.6" rx="0.5" fill="#444"/><path fill="#444" d="M2347.1 158.1h11.9l-5.95 5.9z"/><path fill="#444" d="M2420 158.1h11.9l-5.95 5.9z"/><path fill="#444" d="M2400 148.2L2411.9 148.2L2411.9 159L2407.8 155.2L2404.9 157.8L2401.4 154.3L2404 151.7Z M2400.2 155.9L2404 159.4L2402.1 161L2398.1 157.5Z M2394.9 163.2h18.3v4.7h-18.3z"/><circle cx="2485.6" cy="156.15" r="7.05" fill="none" stroke="#444" stroke-width="2.6"/><path d="M2490.7 161.3L2497 167.3" stroke="#444" stroke-width="3" fill="none"/></svg>
  <table id="t"><colgroup><col style="width:66px"><col style="width:88px"><col style="width:191px"><col style="width:175px"><col style="width:134px"><col style="width:96px"><col style="width:466px"><col style="width:159px"><col style="width:97px"><col style="width:263px"><col style="width:264px"><col style="width:126px"></colgroup>
  <thead><tr><th><svg class="cb" viewBox="0 0 18 18"><rect x="0.7" y="0.7" width="16.6" height="16.6" rx="3" fill="#fff" stroke="#767676" stroke-width="1.4"/></svg></th><th>序号</th><th>用户名</th><th>昵称</th><th>金额</th><th>类型</th><th>摘要</th><th>加入前余额</th><th>类型</th><th>创建时间</th><th>更新时间</th><th>操作</th></tr></thead>
  <tbody>
<tr class="odd"><td><svg class="cb" viewBox="0 0 18 18"><rect x="0.7" y="0.7" width="16.6" height="16.6" rx="3" fill="#fff" stroke="#767676" stroke-width="1.4"/></svg></td><td>190</td><td>18888888888</td><td>188****8888</td><td>300.00</td><td><span class="suc">支出</span></td><td>投资项目[村部充电桩]，使用余额300usdt</td><td>1007.49</td><td><span class="pri">现金</span></td><td>2025-11-17 03:33:31</td><td>2025-11-17 03:33:31</td><td><a class="xs ed"><svg class="fa " viewBox="0 -1536 1536 1792" style="width:0.8571em;"><path transform="scale(1,-1)" d="M363 0l91 91l-235 235l-91 -91v-107h128v-128h107zM886 928q0 22 -22 22q-10 0 -17 -7l-542 -542q-7 -7 -7 -17q0 -22 22 -22q10 0 17 7l542 542q7 7 7 17zM832 1120l416 -416l-832 -832h-416v416zM1515 1024q0 -53 -37 -90l-166 -166l-416 416l166 165q36 38 90 38 q53 0 91 -38l235 -234q37 -39 37 -91z"/></svg></a> <a class="xs de"><svg class="fa " viewBox="0 -1536 1408 1792" style="width:0.7857em;"><path transform="scale(1,-1)" d="M512 160v704q0 14 -9 23t-23 9h-64q-14 0 -23 -9t-9 -23v-704q0 -14 9 -23t23 -9h64q14 0 23 9t9 23zM768 160v704q0 14 -9 23t-23 9h-64q-14 0 -23 -9t-9 -23v-704q0 -14 9 -23t23 -9h64q14 0 23 9t9 23zM1024 160v704q0 14 -9 23t-23 9h-64q-14 0 -23 -9t-9 -23v-704 q0 -14 9 -23t23 -9h64q14 0 23 9t9 23zM480 1152h448l-48 117q-7 9 -17 11h-317q-10 -2 -17 -11zM1408 1120v-64q0 -14 -9 -23t-23 -9h-96v-948q0 -83 -47 -143.5t-113 -60.5h-832q-66 0 -113 58.5t-47 141.5v952h-96q-14 0 -23 9t-9 23v64q0 14 9 23t23 9h309l70 167 q15 37 54 63t79 26h320q40 0 79 -26t54 -63l70 -167h309q14 0 23 -9t9 -23z"/></svg></a></td></tr>
<tr class=""><td><svg class="cb" viewBox="0 0 18 18"><rect x="0.7" y="0.7" width="16.6" height="16.6" rx="3" fill="#fff" stroke="#767676" stroke-width="1.4"/></svg></td><td>189</td><td>13800138000</td><td>138****8000</td><td>3.00</td><td><span class="pri">收入</span></td><td>下级购买，获得奖励3usdt</td><td>591283.26</td><td><span class="pri">现金</span></td><td>2025-11-17 03:33:31</td><td>2025-11-17 03:33:31</td><td><a class="xs ed"><svg class="fa " viewBox="0 -1536 1536 1792" style="width:0.8571em;"><path transform="scale(1,-1)" d="M363 0l91 91l-235 235l-91 -91v-107h128v-128h107zM886 928q0 22 -22 22q-10 0 -17 -7l-542 -542q-7 -7 -7 -17q0 -22 22 -22q10 0 17 7l542 542q7 7 7 17zM832 1120l416 -416l-832 -832h-416v416zM1515 1024q0 -53 -37 -90l-166 -166l-416 416l166 165q36 38 90 38 q53 0 91 -38l235 -234q37 -39 37 -91z"/></svg></a> <a class="xs de"><svg class="fa " viewBox="0 -1536 1408 1792" style="width:0.7857em;"><path transform="scale(1,-1)" d="M512 160v704q0 14 -9 23t-23 9h-64q-14 0 -23 -9t-9 -23v-704q0 -14 9 -23t23 -9h64q14 0 23 9t9 23zM768 160v704q0 14 -9 23t-23 9h-64q-14 0 -23 -9t-9 -23v-704q0 -14 9 -23t23 -9h64q14 0 23 9t9 23zM1024 160v704q0 14 -9 23t-23 9h-64q-14 0 -23 -9t-9 -23v-704 q0 -14 9 -23t23 -9h64q14 0 23 9t9 23zM480 1152h448l-48 117q-7 9 -17 11h-317q-10 -2 -17 -11zM1408 1120v-64q0 -14 -9 -23t-23 -9h-96v-948q0 -83 -47 -143.5t-113 -60.5h-832q-66 0 -113 58.5t-47 141.5v952h-96q-14 0 -23 9t-9 23v64q0 14 9 23t23 9h309l70 167 q15 37 54 63t79 26h320q40 0 79 -26t54 -63l70 -167h309q14 0 23 -9t9 -23z"/></svg></a></td></tr>
<tr class="odd"><td><svg class="cb" viewBox="0 0 18 18"><rect x="0.7" y="0.7" width="16.6" height="16.6" rx="3" fill="#fff" stroke="#767676" stroke-width="1.4"/></svg></td><td>188</td><td>13811112222</td><td>138****2222</td><td>9.00</td><td><span class="pri">收入</span></td><td>下级购买，获得奖励9usdt</td><td>2970.92</td><td><span class="pri">现金</span></td><td>2025-11-17 03:33:31</td><td>2025-11-17 03:33:31</td><td><a class="xs ed"><svg class="fa " viewBox="0 -1536 1536 1792" style="width:0.8571em;"><path transform="scale(1,-1)" d="M363 0l91 91l-235 235l-91 -91v-107h128v-128h107zM886 928q0 22 -22 22q-10 0 -17 -7l-542 -542q-7 -7 -7 -17q0 -22 22 -22q10 0 17 7l542 542q7 7 7 17zM832 1120l416 -416l-832 -832h-416v416zM1515 1024q0 -53 -37 -90l-166 -166l-416 416l166 165q36 38 90 38 q53 0 91 -38l235 -234q37 -39 37 -91z"/></svg></a> <a class="xs de"><svg class="fa " viewBox="0 -1536 1408 1792" style="width:0.7857em;"><path transform="scale(1,-1)" d="M512 160v704q0 14 -9 23t-23 9h-64q-14 0 -23 -9t-9 -23v-704q0 -14 9 -23t23 -9h64q14 0 23 9t9 23zM768 160v704q0 14 -9 23t-23 9h-64q-14 0 -23 -9t-9 -23v-704q0 -14 9 -23t23 -9h64q14 0 23 9t9 23zM1024 160v704q0 14 -9 23t-23 9h-64q-14 0 -23 -9t-9 -23v-704 q0 -14 9 -23t23 -9h64q14 0 23 9t9 23zM480 1152h448l-48 117q-7 9 -17 11h-317q-10 -2 -17 -11zM1408 1120v-64q0 -14 -9 -23t-23 -9h-96v-948q0 -83 -47 -143.5t-113 -60.5h-832q-66 0 -113 58.5t-47 141.5v952h-96q-14 0 -23 9t-9 23v64q0 14 9 23t23 9h309l70 167 q15 37 54 63t79 26h320q40 0 79 -26t54 -63l70 -167h309q14 0 23 -9t9 -23z"/></svg></a></td></tr>
<tr class="hov"><td><svg class="cb" viewBox="0 0 18 18"><rect x="0.7" y="0.7" width="16.6" height="16.6" rx="3" fill="#fff" stroke="#767676" stroke-width="1.4"/></svg></td><td>187</td><td>13988888888</td><td>139****8888</td><td>15.00</td><td><span class="pri">收入</span></td><td>下级购买，获得奖励15usdt</td><td>4536.55</td><td><span class="pri">现金</span></td><td>2025-11-17 03:33:31</td><td>2025-11-17 03:33:31</td><td><a class="xs ed"><svg class="fa " viewBox="0 -1536 1536 1792" style="width:0.8571em;"><path transform="scale(1,-1)" d="M363 0l91 91l-235 235l-91 -91v-107h128v-128h107zM886 928q0 22 -22 22q-10 0 -17 -7l-542 -542q-7 -7 -7 -17q0 -22 22 -22q10 0 17 7l542 542q7 7 7 17zM832 1120l416 -416l-832 -832h-416v416zM1515 1024q0 -53 -37 -90l-166 -166l-416 416l166 165q36 38 90 38 q53 0 91 -38l235 -234q37 -39 37 -91z"/></svg></a> <a class="xs de"><svg class="fa " viewBox="0 -1536 1408 1792" style="width:0.7857em;"><path transform="scale(1,-1)" d="M512 160v704q0 14 -9 23t-23 9h-64q-14 0 -23 -9t-9 -23v-704q0 -14 9 -23t23 -9h64q14 0 23 9t9 23zM768 160v704q0 14 -9 23t-23 9h-64q-14 0 -23 -9t-9 -23v-704q0 -14 9 -23t23 -9h64q14 0 23 9t9 23zM1024 160v704q0 14 -9 23t-23 9h-64q-14 0 -23 -9t-9 -23v-704 q0 -14 9 -23t23 -9h64q14 0 23 9t9 23zM480 1152h448l-48 117q-7 9 -17 11h-317q-10 -2 -17 -11zM1408 1120v-64q0 -14 -9 -23t-23 -9h-96v-948q0 -83 -47 -143.5t-113 -60.5h-832q-66 0 -113 58.5t-47 141.5v952h-96q-14 0 -23 9t-9 23v64q0 14 9 23t23 9h309l70 167 q15 37 54 63t79 26h320q40 0 79 -26t54 -63l70 -167h309q14 0 23 -9t9 -23z"/></svg></a></td></tr>
<tr class="odd"><td><svg class="cb" viewBox="0 0 18 18"><rect x="0.7" y="0.7" width="16.6" height="16.6" rx="3" fill="#fff" stroke="#767676" stroke-width="1.4"/></svg></td><td>185</td><td>13800138000</td><td>138****8000</td><td>1.83</td><td><span class="pri">收入</span></td><td>AI量化机器人 第4期收益1.83usdt</td><td>591281.43</td><td><span class="pri">现金</span></td><td>2024-07-19 19:30:02</td><td>2024-07-19 19:30:02</td><td><a class="xs ed"><svg class="fa " viewBox="0 -1536 1536 1792" style="width:0.8571em;"><path transform="scale(1,-1)" d="M363 0l91 91l-235 235l-91 -91v-107h128v-128h107zM886 928q0 22 -22 22q-10 0 -17 -7l-542 -542q-7 -7 -7 -17q0 -22 22 -22q10 0 17 7l542 542q7 7 7 17zM832 1120l416 -416l-832 -832h-416v416zM1515 1024q0 -53 -37 -90l-166 -166l-416 416l166 165q36 38 90 38 q53 0 91 -38l235 -234q37 -39 37 -91z"/></svg></a> <a class="xs de"><svg class="fa " viewBox="0 -1536 1408 1792" style="width:0.7857em;"><path transform="scale(1,-1)" d="M512 160v704q0 14 -9 23t-23 9h-64q-14 0 -23 -9t-9 -23v-704q0 -14 9 -23t23 -9h64q14 0 23 9t9 23zM768 160v704q0 14 -9 23t-23 9h-64q-14 0 -23 -9t-9 -23v-704q0 -14 9 -23t23 -9h64q14 0 23 9t9 23zM1024 160v704q0 14 -9 23t-23 9h-64q-14 0 -23 -9t-9 -23v-704 q0 -14 9 -23t23 -9h64q14 0 23 9t9 23zM480 1152h448l-48 117q-7 9 -17 11h-317q-10 -2 -17 -11zM1408 1120v-64q0 -14 -9 -23t-23 -9h-96v-948q0 -83 -47 -143.5t-113 -60.5h-832q-66 0 -113 58.5t-47 141.5v952h-96q-14 0 -23 9t-9 23v64q0 14 9 23t23 9h309l70 167 q15 37 54 63t79 26h320q40 0 79 -26t54 -63l70 -167h309q14 0 23 -9t9 -23z"/></svg></a></td></tr>
<tr class=""><td><svg class="cb" viewBox="0 0 18 18"><rect x="0.7" y="0.7" width="16.6" height="16.6" rx="3" fill="#fff" stroke="#767676" stroke-width="1.4"/></svg></td><td>184</td><td>13988888888</td><td>139****8888</td><td>1000.00</td><td><span class="suc">支出</span></td><td>会员申请提现</td><td>5536.55</td><td><span class="pri">现金</span></td><td>2024-07-19 19:13:59</td><td>2024-07-19 19:13:59</td><td><a class="xs ed"><svg class="fa " viewBox="0 -1536 1536 1792" style="width:0.8571em;"><path transform="scale(1,-1)" d="M363 0l91 91l-235 235l-91 -91v-107h128v-128h107zM886 928q0 22 -22 22q-10 0 -17 -7l-542 -542q-7 -7 -7 -17q0 -22 22 -22q10 0 17 7l542 542q7 7 7 17zM832 1120l416 -416l-832 -832h-416v416zM1515 1024q0 -53 -37 -90l-166 -166l-416 416l166 165q36 38 90 38 q53 0 91 -38l235 -234q37 -39 37 -91z"/></svg></a> <a class="xs de"><svg class="fa " viewBox="0 -1536 1408 1792" style="width:0.7857em;"><path transform="scale(1,-1)" d="M512 160v704q0 14 -9 23t-23 9h-64q-14 0 -23 -9t-9 -23v-704q0 -14 9 -23t23 -9h64q14 0 23 9t9 23zM768 160v704q0 14 -9 23t-23 9h-64q-14 0 -23 -9t-9 -23v-704q0 -14 9 -23t23 -9h64q14 0 23 9t9 23zM1024 160v704q0 14 -9 23t-23 9h-64q-14 0 -23 -9t-9 -23v-704 q0 -14 9 -23t23 -9h64q14 0 23 9t9 23zM480 1152h448l-48 117q-7 9 -17 11h-317q-10 -2 -17 -11zM1408 1120v-64q0 -14 -9 -23t-23 -9h-96v-948q0 -83 -47 -143.5t-113 -60.5h-832q-66 0 -113 58.5t-47 141.5v952h-96q-14 0 -23 9t-9 23v64q0 14 9 23t23 9h309l70 167 q15 37 54 63t79 26h320q40 0 79 -26t54 -63l70 -167h309q14 0 23 -9t9 -23z"/></svg></a></td></tr>
<tr class="odd"><td><svg class="cb" viewBox="0 0 18 18"><rect x="0.7" y="0.7" width="16.6" height="16.6" rx="3" fill="#fff" stroke="#767676" stroke-width="1.4"/></svg></td><td>183</td><td>13988888888</td><td>139****8888</td><td>100.00</td><td><span class="suc">支出</span></td><td>会员申请提现</td><td>5636.55</td><td><span class="pri">现金</span></td><td>2024-07-19 19:12:51</td><td>2024-07-19 19:12:51</td><td><a class="xs ed"><svg class="fa " viewBox="0 -1536 1536 1792" style="width:0.8571em;"><path transform="scale(1,-1)" d="M363 0l91 91l-235 235l-91 -91v-107h128v-128h107zM886 928q0 22 -22 22q-10 0 -17 -7l-542 -542q-7 -7 -7 -17q0 -22 22 -22q10 0 17 7l542 542q7 7 7 17zM832 1120l416 -416l-832 -832h-416v416zM1515 1024q0 -53 -37 -90l-166 -166l-416 416l166 165q36 38 90 38 q53 0 91 -38l235 -234q37 -39 37 -91z"/></svg></a> <a class="xs de"><svg class="fa " viewBox="0 -1536 1408 1792" style="width:0.7857em;"><path transform="scale(1,-1)" d="M512 160v704q0 14 -9 23t-23 9h-64q-14 0 -23 -9t-9 -23v-704q0 -14 9 -23t23 -9h64q14 0 23 9t9 23zM768 160v704q0 14 -9 23t-23 9h-64q-14 0 -23 -9t-9 -23v-704q0 -14 9 -23t23 -9h64q14 0 23 9t9 23zM1024 160v704q0 14 -9 23t-23 9h-64q-14 0 -23 -9t-9 -23v-704 q0 -14 9 -23t23 -9h64q14 0 23 9t9 23zM480 1152h448l-48 117q-7 9 -17 11h-317q-10 -2 -17 -11zM1408 1120v-64q0 -14 -9 -23t-23 -9h-96v-948q0 -83 -47 -143.5t-113 -60.5h-832q-66 0 -113 58.5t-47 141.5v952h-96q-14 0 -23 9t-9 23v64q0 14 9 23t23 9h309l70 167 q15 37 54 63t79 26h320q40 0 79 -26t54 -63l70 -167h309q14 0 23 -9t9 -23z"/></svg></a></td></tr>
<tr class=""><td><svg class="cb" viewBox="0 0 18 18"><rect x="0.7" y="0.7" width="16.6" height="16.6" rx="3" fill="#fff" stroke="#767676" stroke-width="1.4"/></svg></td><td>182</td><td>13888888888</td><td>138****8888</td><td>100.00</td><td><span class="suc">支出</span></td><td>会员申请提现</td><td>617.17</td><td><span class="pri">现金</span></td><td>2024-07-19 19:10:29</td><td>2024-07-19 19:10:29</td><td><a class="xs ed"><svg class="fa " viewBox="0 -1536 1536 1792" style="width:0.8571em;"><path transform="scale(1,-1)" d="M363 0l91 91l-235 235l-91 -91v-107h128v-128h107zM886 928q0 22 -22 22q-10 0 -17 -7l-542 -542q-7 -7 -7 -17q0 -22 22 -22q10 0 17 7l542 542q7 7 7 17zM832 1120l416 -416l-832 -832h-416v416zM1515 1024q0 -53 -37 -90l-166 -166l-416 416l166 165q36 38 90 38 q53 0 91 -38l235 -234q37 -39 37 -91z"/></svg></a> <a class="xs de"><svg class="fa " viewBox="0 -1536 1408 1792" style="width:0.7857em;"><path transform="scale(1,-1)" d="M512 160v704q0 14 -9 23t-23 9h-64q-14 0 -23 -9t-9 -23v-704q0 -14 9 -23t23 -9h64q14 0 23 9t9 23zM768 160v704q0 14 -9 23t-23 9h-64q-14 0 -23 -9t-9 -23v-704q0 -14 9 -23t23 -9h64q14 0 23 9t9 23zM1024 160v704q0 14 -9 23t-23 9h-64q-14 0 -23 -9t-9 -23v-704 q0 -14 9 -23t23 -9h64q14 0 23 9t9 23zM480 1152h448l-48 117q-7 9 -17 11h-317q-10 -2 -17 -11zM1408 1120v-64q0 -14 -9 -23t-23 -9h-96v-948q0 -83 -47 -143.5t-113 -60.5h-832q-66 0 -113 58.5t-47 141.5v952h-96q-14 0 -23 9t-9 23v64q0 14 9 23t23 9h309l70 167 q15 37 54 63t79 26h320q40 0 79 -26t54 -63l70 -167h309q14 0 23 -9t9 -23z"/></svg></a></td></tr>
<tr class="odd"><td><svg class="cb" viewBox="0 0 18 18"><rect x="0.7" y="0.7" width="16.6" height="16.6" rx="3" fill="#fff" stroke="#767676" stroke-width="1.4"/></svg></td><td>181</td><td>13888888888</td><td>138****8888</td><td>500.00</td><td><span class="suc">支出</span></td><td>会员申请提现</td><td>1117.17</td><td><span class="pri">现金</span></td><td>2024-07-19 18:56:29</td><td>2024-07-19 18:56:29</td><td><a class="xs ed"><svg class="fa " viewBox="0 -1536 1536 1792" style="width:0.8571em;"><path transform="scale(1,-1)" d="M363 0l91 91l-235 235l-91 -91v-107h128v-128h107zM886 928q0 22 -22 22q-10 0 -17 -7l-542 -542q-7 -7 -7 -17q0 -22 22 -22q10 0 17 7l542 542q7 7 7 17zM832 1120l416 -416l-832 -832h-416v416zM1515 1024q0 -53 -37 -90l-166 -166l-416 416l166 165q36 38 90 38 q53 0 91 -38l235 -234q37 -39 37 -91z"/></svg></a> <a class="xs de"><svg class="fa " viewBox="0 -1536 1408 1792" style="width:0.7857em;"><path transform="scale(1,-1)" d="M512 160v704q0 14 -9 23t-23 9h-64q-14 0 -23 -9t-9 -23v-704q0 -14 9 -23t23 -9h64q14 0 23 9t9 23zM768 160v704q0 14 -9 23t-23 9h-64q-14 0 -23 -9t-9 -23v-704q0 -14 9 -23t23 -9h64q14 0 23 9t9 23zM1024 160v704q0 14 -9 23t-23 9h-64q-14 0 -23 -9t-9 -23v-704 q0 -14 9 -23t23 -9h64q14 0 23 9t9 23zM480 1152h448l-48 117q-7 9 -17 11h-317q-10 -2 -17 -11zM1408 1120v-64q0 -14 -9 -23t-23 -9h-96v-948q0 -83 -47 -143.5t-113 -60.5h-832q-66 0 -113 58.5t-47 141.5v952h-96q-14 0 -23 9t-9 23v64q0 14 9 23t23 9h309l70 167 q15 37 54 63t79 26h320q40 0 79 -26t54 -63l70 -167h309q14 0 23 -9t9 -23z"/></svg></a></td></tr>
<tr class=""><td><svg class="cb" viewBox="0 0 18 18"><rect x="0.7" y="0.7" width="16.6" height="16.6" rx="3" fill="#fff" stroke="#767676" stroke-width="1.4"/></svg></td><td>180</td><td>15822225555</td><td>158****5555</td><td>2.00</td><td><span class="pri">收入</span></td><td>获取158****5555注册奖励2usdt</td><td>0.00</td><td><span class="pri">现金</span></td><td>2024-07-19 18:50:14</td><td>2024-07-19 18:50:14</td><td><a class="xs ed"><svg class="fa " viewBox="0 -1536 1536 1792" style="width:0.8571em;"><path transform="scale(1,-1)" d="M363 0l91 91l-235 235l-91 -91v-107h128v-128h107zM886 928q0 22 -22 22q-10 0 -17 -7l-542 -542q-7 -7 -7 -17q0 -22 22 -22q10 0 17 7l542 542q7 7 7 17zM832 1120l416 -416l-832 -832h-416v416zM1515 1024q0 -53 -37 -90l-166 -166l-416 416l166 165q36 38 90 38 q53 0 91 -38l235 -234q37 -39 37 -91z"/></svg></a> <a class="xs de"><svg class="fa " viewBox="0 -1536 1408 1792" style="width:0.7857em;"><path transform="scale(1,-1)" d="M512 160v704q0 14 -9 23t-23 9h-64q-14 0 -23 -9t-9 -23v-704q0 -14 9 -23t23 -9h64q14 0 23 9t9 23zM768 160v704q0 14 -9 23t-23 9h-64q-14 0 -23 -9t-9 -23v-704q0 -14 9 -23t23 -9h64q14 0 23 9t9 23zM1024 160v704q0 14 -9 23t-23 9h-64q-14 0 -23 -9t-9 -23v-704 q0 -14 9 -23t23 -9h64q14 0 23 9t9 23zM480 1152h448l-48 117q-7 9 -17 11h-317q-10 -2 -17 -11zM1408 1120v-64q0 -14 -9 -23t-23 -9h-96v-948q0 -83 -47 -143.5t-113 -60.5h-832q-66 0 -113 58.5t-47 141.5v952h-96q-14 0 -23 9t-9 23v64q0 14 9 23t23 9h309l70 167 q15 37 54 63t79 26h320q40 0 79 -26t54 -63l70 -167h309q14 0 23 -9t9 -23z"/></svg></a></td></tr>
  </tbody></table>
  <div class="pinfo">显示第 1 到第 10 条记录，总共 175 条记录 <span class="pl">每页显示 <span class="psz">10 <span class="caret up"></span></span> 条记录</span></div>
  <ul class="pg"><li class="" style="left:0.0px;width:99.7px">上一页</li><li class="act" style="left:98.7px;width:50.7px">1</li><li class="" style="left:148.4px;width:48.5px">2</li><li class="" style="left:195.9px;width:49.2px">3</li><li class="" style="left:244.1px;width:49.1px">4</li><li class="" style="left:292.2px;width:48.9px">5</li><li class="dis" style="left:340.1px;width:54.9px">...</li><li class="" style="left:394.0px;width:61.0px">18</li><li class="" style="left:454.0px;width:100.7px">下一页</li></ul>
  <div class="jin"></div>
  <a class="jbtn">跳转</a>
</div>
</body></html>
